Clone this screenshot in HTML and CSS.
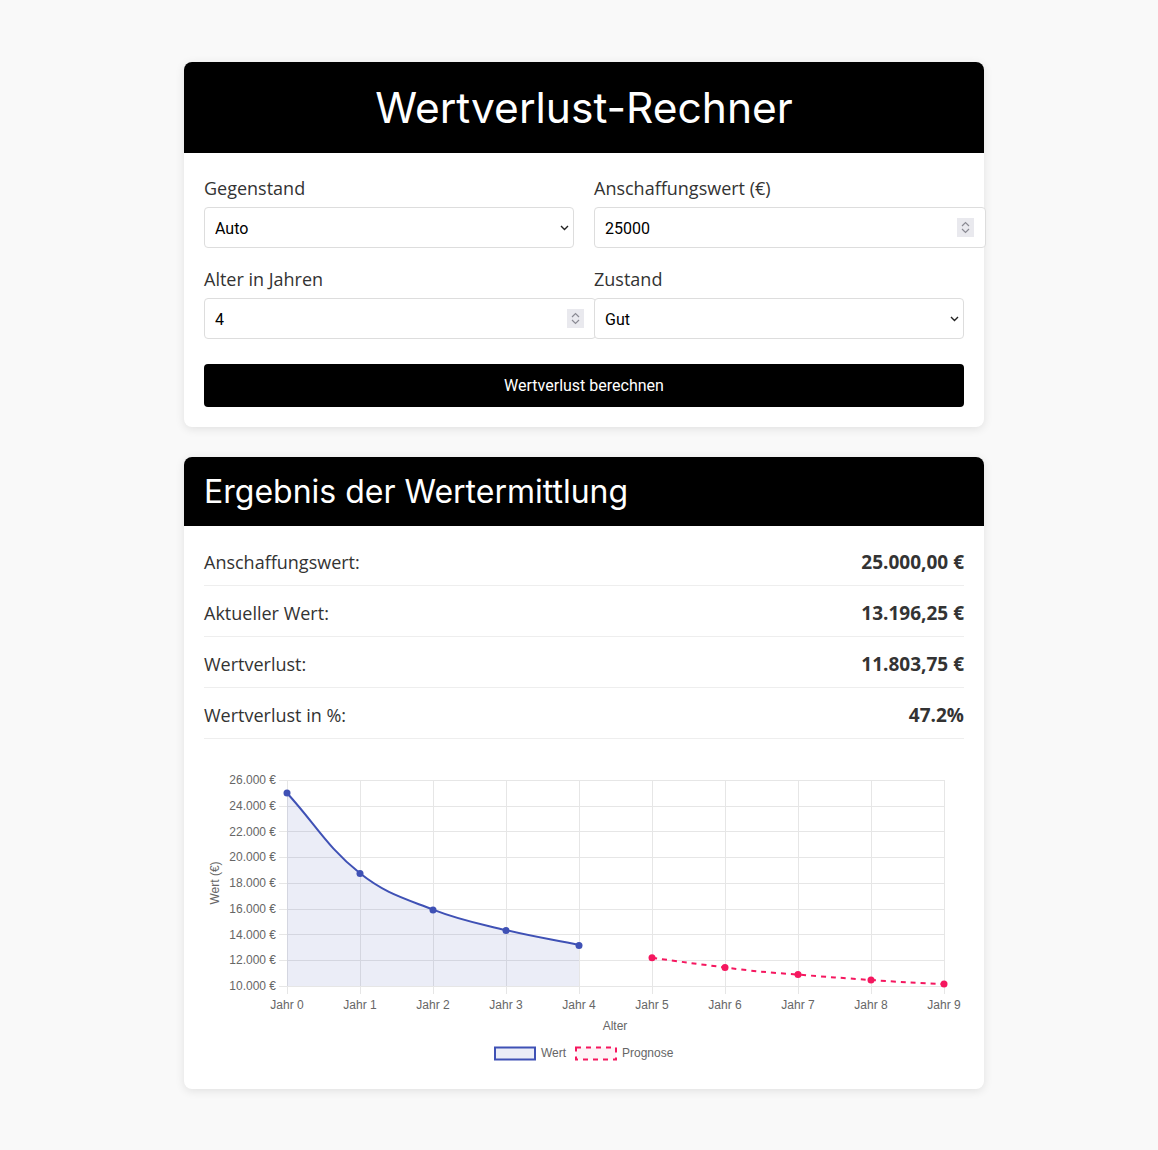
FILE: index.html
```html
<!DOCTYPE html>
<html lang="de">
<head>
<meta charset="UTF-8">
<title>Wertverlust-Rechner</title>
<link rel="stylesheet" href="styles.css">
</head>
<body>
<div class="container">

	<div class="card">
		<h1 class="card-title center">Wertverlust-Rechner</h1>
		<div class="card-body">
			<div class="form-grid">
				<div class="form-group">
					<label>Gegenstand</label>
					<div class="field">
						<select>
							<option>Auto</option>
						</select>
						<svg class="chevron" width="9" height="6" viewBox="0 0 9 6"><path d="M1 1l3.5 3.5L8 1" fill="none" stroke="#222" stroke-width="1.4"/></svg>
					</div>
				</div>
				<div class="form-group">
					<label>Anschaffungswert (€)</label>
					<div class="field">
						<input type="number" value="25000">
						<span class="spin"><svg width="9" height="13" viewBox="0 0 9 13"><path d="M1 5l3.5-3.5L8 5M1 8l3.5 3.5L8 8" fill="none" stroke="#8a8a93" stroke-width="1.2"/></svg></span>
					</div>
				</div>
				<div class="form-group">
					<label>Alter in Jahren</label>
					<div class="field">
						<input type="number" value="4">
						<span class="spin"><svg width="9" height="13" viewBox="0 0 9 13"><path d="M1 5l3.5-3.5L8 5M1 8l3.5 3.5L8 8" fill="none" stroke="#8a8a93" stroke-width="1.2"/></svg></span>
					</div>
				</div>
				<div class="form-group">
					<label>Zustand</label>
					<div class="field">
						<select>
							<option>Gut</option>
						</select>
						<svg class="chevron" width="9" height="6" viewBox="0 0 9 6"><path d="M1 1l3.5 3.5L8 1" fill="none" stroke="#222" stroke-width="1.4"/></svg>
					</div>
				</div>
			</div>
			<button class="btn">Wertverlust berechnen</button>
		</div>
	</div>

	<div class="card">
		<h2 class="card-title">Ergebnis der Wertermittlung</h2>
		<div class="card-body results">
			<div class="row"><span>Anschaffungswert:</span><b>25.000,00 €</b></div>
			<div class="row"><span>Aktueller Wert:</span><b>13.196,25 €</b></div>
			<div class="row"><span>Wertverlust:</span><b>11.803,75 €</b></div>
			<div class="row"><span>Wertverlust in %:</span><b>47.2%</b></div>

			<svg class="chart" width="760" height="309" viewBox="204 759 760 309">
				<!-- grid -->
				<g stroke="#e6e6e6" stroke-width="1">
					<line x1="279" y1="779.5" x2="944" y2="779.5"/>
					<line x1="279" y1="805.5" x2="944" y2="805.5"/>
					<line x1="279" y1="830.5" x2="944" y2="830.5"/>
					<line x1="279" y1="856.5" x2="944" y2="856.5"/>
					<line x1="279" y1="882.5" x2="944" y2="882.5"/>
					<line x1="279" y1="908.5" x2="944" y2="908.5"/>
					<line x1="279" y1="933.5" x2="944" y2="933.5"/>
					<line x1="279" y1="959.5" x2="944" y2="959.5"/>
					<line x1="279" y1="985.5" x2="944" y2="985.5"/>
					<line x1="287.5" y1="779" x2="287.5" y2="993"/>
					<line x1="360.5" y1="779" x2="360.5" y2="993"/>
					<line x1="433.5" y1="779" x2="433.5" y2="993"/>
					<line x1="506.5" y1="779" x2="506.5" y2="993"/>
					<line x1="579.5" y1="779" x2="579.5" y2="993"/>
					<line x1="652.5" y1="779" x2="652.5" y2="993"/>
					<line x1="725.5" y1="779" x2="725.5" y2="993"/>
					<line x1="798.5" y1="779" x2="798.5" y2="993"/>
					<line x1="871.5" y1="779" x2="871.5" y2="993"/>
					<line x1="944.5" y1="779" x2="944.5" y2="993"/>
				</g>

				<g class="ticks" text-anchor="end">
					<text x="276" y="783">26.000 €</text>
					<text x="276" y="809">24.000 €</text>
					<text x="276" y="835">22.000 €</text>
					<text x="276" y="860">20.000 €</text>
					<text x="276" y="886">18.000 €</text>
					<text x="276" y="912">16.000 €</text>
					<text x="276" y="938">14.000 €</text>
					<text x="276" y="963">12.000 €</text>
					<text x="276" y="989">10.000 €</text>
				</g>
				<g class="ticks" text-anchor="middle">
					<text x="287" y="1008">Jahr 0</text>
					<text x="360" y="1008">Jahr 1</text>
					<text x="433" y="1008">Jahr 2</text>
					<text x="506" y="1008">Jahr 3</text>
					<text x="579" y="1008">Jahr 4</text>
					<text x="652" y="1008">Jahr 5</text>
					<text x="725" y="1008">Jahr 6</text>
					<text x="798" y="1008">Jahr 7</text>
					<text x="871" y="1008">Jahr 8</text>
					<text x="944" y="1008">Jahr 9</text>
					<text x="615" y="1029">Alter</text>
					<text transform="translate(219 882) rotate(-90)">Wert (€)</text>
				</g>

				<!-- Wert -->
				<path d="M287,792 C316.2,824.1 326.7,845.7 360,872.3 C385.1,892.3 402.7,896.8 433,908.6 C461.1,919.6 476.6,922 506,929.1 C535,936.1 549.8,938 579,943.9 L579,985 L287,985 Z" fill="rgba(63,81,181,0.1)"/>
				<path d="M287,792 C316.2,824.1 326.7,845.7 360,872.3 C385.1,892.3 402.7,896.8 433,908.6 C461.1,919.6 476.6,922 506,929.1 C535,936.1 549.8,938 579,943.9" fill="none" stroke="#3f51b5" stroke-width="2"/>
				<g fill="#3f51b5">
					<circle cx="287" cy="792" r="3.5"/>
					<circle cx="360" cy="872.5" r="3.5"/>
					<circle cx="433" cy="909" r="3.5"/>
					<circle cx="506" cy="929.5" r="3.5"/>
					<circle cx="579" cy="944.5" r="3.5"/>
				</g>

				<!-- Prognose -->
				<path d="M652,956.7 C681,961 696,962.6 725,966.5 C754,970.3 769,971.5 798,973.6 C827,975.9 842,977 871,979 C900,980.9 915,982 944,983" fill="none" stroke="#f5175f" stroke-width="2" stroke-dasharray="5 5"/>
				<g fill="#f5175f">
					<circle cx="652" cy="956.7" r="3.5"/>
					<circle cx="725" cy="966.5" r="3.5"/>
					<circle cx="798" cy="973.6" r="3.5"/>
					<circle cx="871" cy="979" r="3.5"/>
					<circle cx="944" cy="983" r="3.5"/>
				</g>

				<!-- legend -->
				<rect x="495" y="1046.5" width="40" height="12" fill="rgba(63,81,181,0.1)" stroke="#3f51b5" stroke-width="2"/>
				<text class="legend" x="541" y="1056">Wert</text>
				<rect x="576" y="1046.5" width="40" height="12" fill="rgba(245,23,95,0.05)" stroke="#f5175f" stroke-width="2" stroke-dasharray="5 5"/>
				<text class="legend" x="622" y="1056">Prognose</text>
			</svg>
		</div>
	</div>

</div>
</body>
</html>
```

FILE: styles.css
```css
body {
margin:0;
padding:62px 0 60px 10px;
background:#f9f9f9;
font-family:"Open Sans","Noto Sans",sans-serif;
color:#333;
}
.container {
width:800px;
margin:0 auto;
}
.card {
background:#fff;
border-radius:8px;
box-shadow:0 2px 10px rgba(0,0,0,0.1);
margin-bottom:30px;
}
.card-title {
margin:0;
background:#000;
color:#fff;
font-family:Inter,sans-serif;
font-weight:400;
font-size:32px;
line-height:39px;
padding:15px 20px;
border-radius:8px 8px 0 0;
}
.card-title.center {
text-align:center;
font-size:42.5px;
line-height:49px;
padding:21px 20px;
}
.card-body {
padding:20px;
}
.form-grid {
display:grid;
grid-template-columns:370px 370px;
column-gap:20px;
row-gap:16px;
}
.form-group label {
display:block;
font-size:18px;
line-height:27px;
padding-top:2px;
margin-bottom:5px;
}
.field {
position:relative;
}
.field select,
.field input {
display:block;
font-family:Roboto,sans-serif;
font-size:16px;
line-height:19px;
color:#000;
background:#fff;
border:1px solid #ddd;
border-radius:4px;
padding:11px 10px 9px;
margin:0;
outline:none;
}
.field select {
width:100%;
height:41px;
box-sizing:border-box;
-webkit-appearance:none;
appearance:none;
}
.field input {
width:100%;
box-sizing:content-box;
height:19px;
-moz-appearance:textfield;
}
.field input::-webkit-inner-spin-button,
.field input::-webkit-outer-spin-button {
-webkit-appearance:none;
margin:0;
}
.chevron {
position:absolute;
right:5px;
top:18px;
}
.spin {
position:absolute;
right:-10px;
top:11px;
width:17px;
height:19px;
background:#e9e9ee;
display:flex;
align-items:center;
justify-content:center;
}
.btn {
display:block;
width:100%;
margin-top:25px;
height:43px;
border:0;
border-radius:4px;
background:#000;
color:#fff;
font-family:Roboto,sans-serif;
font-size:16px;
cursor:pointer;
}
.results {
padding-top:9px;
}
.row {
display:flex;
justify-content:space-between;
align-items:center;
padding:13px 0 9px;
line-height:28px;
font-size:18px;
border-bottom:1px solid #eee;
}
.row b {
font-weight:700;
font-size:19px;
}
.chart {
display:block;
margin-top:21px;
}
.ticks text,
.legend {
font-family:"Liberation Sans",Arial,sans-serif;
font-size:12px;
fill:#666;
}
```
